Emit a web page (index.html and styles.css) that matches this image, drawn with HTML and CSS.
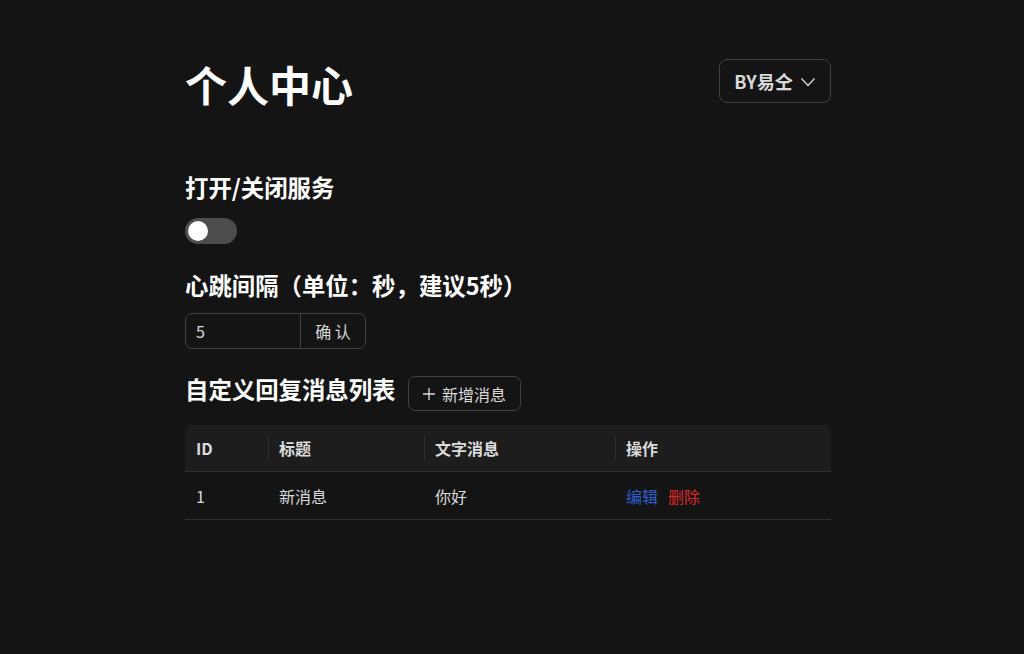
FILE: index.html
```html
<!DOCTYPE html>
<html lang="zh-CN">
<head>
<meta charset="utf-8">
<link rel="stylesheet" href="styles.css">
</head>
<body>
<div class="page">
  <header class="top">
    <h1 class="title">个人中心</h1>
    <button class="user-btn">BY易仝 <svg class="chev" viewBox="0 0 16 16" width="16" height="16"><path d="M1.5 4.5 L8 11.5 L14.5 4.5" fill="none" stroke="currentColor" stroke-width="1.3"/></svg></button>
  </header>

  <section class="block b1">
    <h4 class="sub">打开/关闭服务</h4>
    <div class="switch"><span class="knob"></span></div>
  </section>

  <section class="block b2">
    <h4 class="sub">心跳间隔（单位：秒，建议5秒）</h4>
    <div class="input-group">
      <input class="num" type="text" value="5">
      <button class="confirm">确 认</button>
    </div>
  </section>

  <section class="block b3">
    <div class="list-head">
      <h4 class="sub">自定义回复消息列表</h4>
      <button class="add-btn"><svg viewBox="0 0 14 14" width="14" height="14"><path d="M7 1v12M1 7h12" stroke="currentColor" stroke-width="1.3"/></svg>新增消息</button>
    </div>
    <table class="tbl">
      <thead>
        <tr><th class="c1">ID</th><th class="c2">标题</th><th class="c3">文字消息</th><th class="c4">操作</th></tr>
      </thead>
      <tbody>
        <tr><td>1</td><td>新消息</td><td>你好</td><td><a class="edit">编辑</a><a class="del">删除</a></td></tr>
      </tbody>
    </table>
  </section>
</div>
</body>
</html>
```
FILE: styles.css
```css
* { box-sizing: border-box; }
html, body { margin: 0; padding: 0; background: #141414; }
body {
  font-family: "Noto Sans CJK SC", "Noto Sans", sans-serif;
  color: rgba(255,255,255,0.85);
  font-size: 16px;
}
.page {
  width: 646px;
  margin-left: 185px;
  padding-top: 59px;
}
.top {
  display: flex;
  justify-content: space-between;
  align-items: flex-start;
}
.title {
  margin: 0;
  font-size: 42px;
  line-height: 50px;
  font-weight: 700;
  color: #fff;
}
.user-btn {
  height: 44px;
  width: 112px;
  background: #141414;
  border: 1px solid #424242;
  border-radius: 8px;
  color: rgba(255,255,255,0.85);
  font-family: inherit;
  font-size: 18px;
  font-weight: 700;
  display: flex;
  align-items: center;
  justify-content: center;
  gap: 7px;
  padding: 0;
  box-shadow: 0 2px 0 rgba(0,0,0,0.02);
}
.chev { margin-top: 1px; }
.sub {
  margin: 0;
  font-size: 23.4px;
  line-height: 32px;
  font-weight: 700;
  color: #fff;
}
.b1 { margin-top: 62px; }
.switch {
  margin-top: 15px;
  width: 52px;
  height: 26px;
  border-radius: 13px;
  background: #4d4d4d;
  position: relative;
}
.knob {
  position: absolute;
  left: 3px;
  top: 3px;
  width: 20px;
  height: 20px;
  border-radius: 50%;
  background: #fff;
}
.b2 { margin-top: 25px; }
.input-group {
  margin-top: 12px;
  display: flex;
  width: 181px;
  height: 36px;
}
.num {
  width: 116px;
  height: 36px;
  background: #141414;
  border: 1px solid #424242;
  border-radius: 7px 0 0 7px;
  color: rgba(255,255,255,0.85);
  font-family: inherit;
  font-size: 16px;
  padding: 0 10px;
  outline: none;
}
.confirm {
  width: 66px;
  height: 36px;
  margin-left: -1px;
  background: #141414;
  border: 1px solid #424242;
  border-radius: 0 7px 7px 0;
  color: rgba(255,255,255,0.85);
  font-family: inherit;
  font-size: 16px;
  padding: 0;
}
.b3 { margin-top: 24px; }
.list-head {
  display: flex;
  align-items: flex-start;
  gap: 12px;
}
.add-btn {
  margin-top: 3px;
  height: 35px;
  width: 113px;
  background: #141414;
  border: 1px solid #424242;
  border-radius: 7px;
  color: rgba(255,255,255,0.85);
  font-family: inherit;
  font-size: 16px;
  display: flex;
  align-items: center;
  justify-content: center;
  gap: 6px;
  padding: 0;
}
.tbl {
  margin-top: 14px;
  width: 100%;
  border-collapse: separate;
  border-spacing: 0;
  table-layout: fixed;
}
.tbl th, .tbl td {
  text-align: left;
  padding: 0 11px;
  font-size: 16px;
}
.tbl th {
  height: 47px;
  background: #1d1d1d;
  font-weight: 700;
  color: rgba(255,255,255,0.85);
  border-bottom: 1px solid #303030;
  position: relative;
}
.tbl th + th::before {
  content: "";
  position: absolute;
  left: 0;
  top: 50%;
  width: 1px;
  height: 24px;
  transform: translateY(-50%);
  background: #303030;
}
.tbl th:first-child { border-top-left-radius: 8px; }
.tbl th:last-child { border-top-right-radius: 8px; }
.c1 { width: 83px; }
.c2 { width: 156px; }
.c3 { width: 191px; }
.tbl td {
  height: 48px;
  border-bottom: 1px solid #303030;
}
.edit { color: #2f5fd0; margin-right: 10px; }
.del { color: #dc2a2a; }
```
